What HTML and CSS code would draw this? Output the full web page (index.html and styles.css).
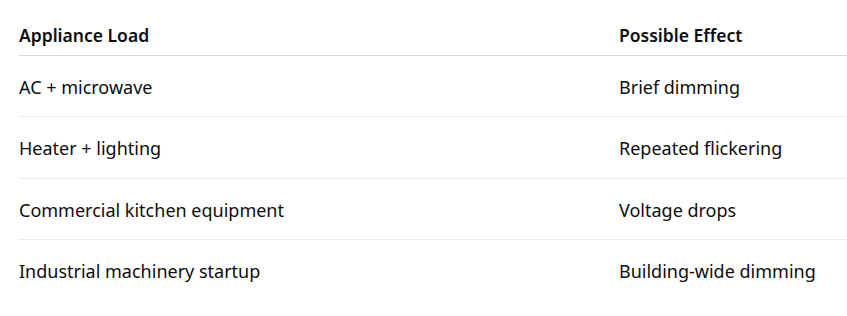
FILE: index.html
```html
<!DOCTYPE html>
<html>
<head>
  <title>Appliance Load Effects</title>
  <link rel="stylesheet" href="styles.css">
</head>
<body>
  <div class="content">
    <h3 class="section-title">How Appliance Loads Typically Affect Lighting Quality</h3>

    <table class="load-table">
      <thead>
        <tr>
          <th>Appliance Load</th>
          <th>Possible Effect</th>
        </tr>
      </thead>
      <tbody>
        <tr>
          <td>AC + microwave</td>
          <td>Brief dimming</td>
        </tr>
        <tr>
          <td>Heater + lighting</td>
          <td>Repeated flickering</td>
        </tr>
        <tr>
          <td>Commercial kitchen equipment</td>
          <td>Voltage drops</td>
        </tr>
        <tr>
          <td>Industrial machinery startup</td>
          <td>Building-wide dimming</td>
        </tr>
      </tbody>
    </table>
  </div>
</body>
</html>
```

FILE: styles.css
```css
:root {
  --text-color: #0d0d0d;
  --head-border: #d9d9d9;
  --row-border: #ececec;
  --bg-color: #ffffff;
}

body {
  margin: 0;
  background: var(--bg-color);
  color: var(--text-color);
  font-family: "Noto Sans", "Open Sans", Arial, sans-serif;
  overflow: hidden;
}

.content {
  padding-left: 19px;
}

.section-title {
  margin: -25.6px 0 0;
  padding-left: 100px;
  font-size: 20px;
  font-weight: 700;
  line-height: 28px;
  white-space: nowrap;
}

.load-table {
  width: 100%;
  margin-top: 11.6px;
  border-collapse: collapse;
  font-size: 18px;
}

.load-table th,
.load-table td {
  text-align: left;
  padding: 0;
  vertical-align: middle;
}

.load-table th {
  font-weight: 600;
  font-size: 17.5px;
  height: 41px;
  border-bottom: 1px solid var(--head-border);
}

.load-table td {
  height: 58.3px;
  padding-top: 2px;
  border-bottom: 1px solid var(--row-border);
}

.load-table tbody tr:last-child td {
  border-bottom: none;
}

.load-table th:first-child,
.load-table td:first-child {
  width: 600px;
}
```
